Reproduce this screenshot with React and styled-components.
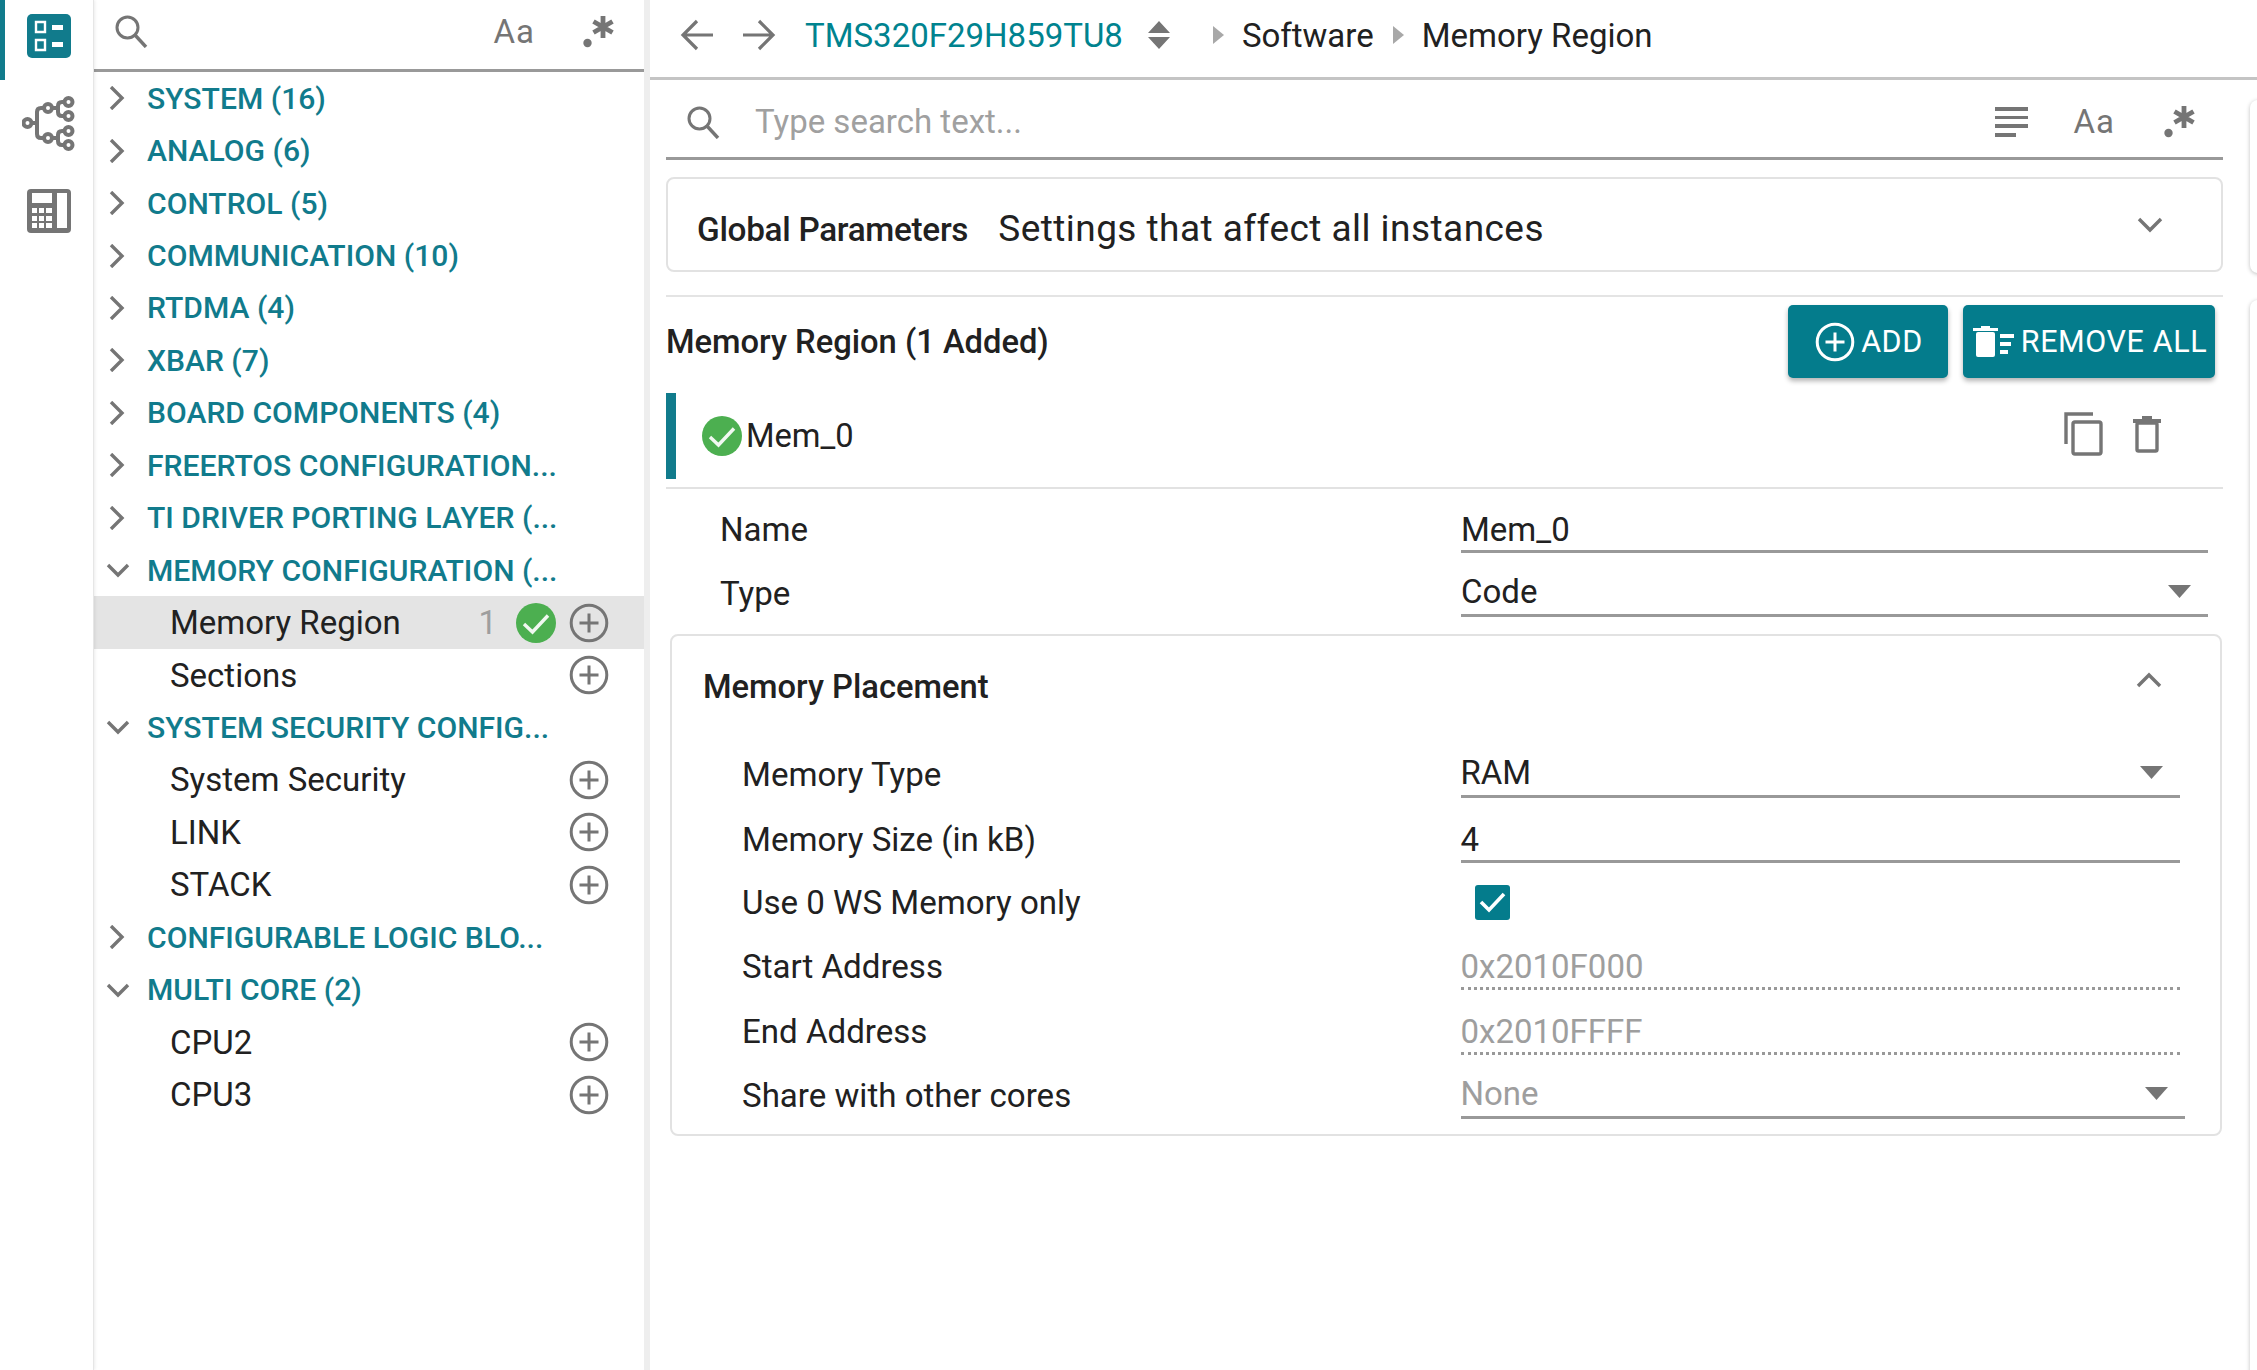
import React from 'react'
import styled, { createGlobalStyle } from 'styled-components'

const GlobalStyle = createGlobalStyle`
  * { box-sizing: border-box; }
  html, body { margin: 0; padding: 0; background: #fff; }
  body { font-family: Roboto, "Liberation Sans", sans-serif; color: #212121; }
`

const sidebarRows = [
  { kind: 'group', label: 'SYSTEM (16)' },
  { kind: 'group', label: 'ANALOG (6)' },
  { kind: 'group', label: 'CONTROL (5)' },
  { kind: 'group', label: 'COMMUNICATION (10)' },
  { kind: 'group', label: 'RTDMA (4)' },
  { kind: 'group', label: 'XBAR (7)' },
  { kind: 'group', label: 'BOARD COMPONENTS (4)' },
  { kind: 'group', label: 'FREERTOS CONFIGURATION...' },
  { kind: 'group', label: 'TI DRIVER PORTING LAYER (...' },
  { kind: 'group', label: 'MEMORY CONFIGURATION (...', open: true },
  { kind: 'item', label: 'Memory Region', count: 1, active: true },
  { kind: 'item', label: 'Sections' },
  { kind: 'group', label: 'SYSTEM SECURITY CONFIG...', open: true },
  { kind: 'item', label: 'System Security' },
  { kind: 'item', label: 'LINK' },
  { kind: 'item', label: 'STACK' },
  { kind: 'group', label: 'CONFIGURABLE LOGIC BLO...' },
  { kind: 'group', label: 'MULTI CORE (2)', open: true },
  { kind: 'item', label: 'CPU2' },
  { kind: 'item', label: 'CPU3' },
]

const Search = () => (
  <svg width="34" height="34" viewBox="0 0 34 34" fill="none" stroke="#757575">
    <circle cx="13.5" cy="13.5" r="10.5" strokeWidth="3" />
    <path d="M21 21 L32 33" strokeWidth="3.4" />
  </svg>
)

const Regex = () => (
  <svg width="32" height="33" viewBox="0 0 32 33" fill="none" stroke="#757575" strokeWidth="4.8">
    <circle cx="4.5" cy="28" r="4.2" fill="#757575" stroke="none" />
    <path d="M20 1 V23 M10.5 6.5 L29.5 17.5 M10.5 17.5 L29.5 6.5" />
  </svg>
)

const Chevron = ({ open }) => (
  <svg width="24" height="24" viewBox="0 0 24 24" fill="none" stroke="#757575" strokeWidth="3.4">
    {open ? <path d="M2 7 L12 17 L22 7" /> : <path d="M5 1 L16 12 L5 23" />}
  </svg>
)

const AddCircle = ({ color = '#757575' }) => (
  <svg width="40" height="40" viewBox="0 0 40 40" fill="none" stroke={color}>
    <circle cx="20" cy="20" r="17.8" strokeWidth="3" />
    <path d="M20 10.5 V29.5 M10.5 20 H29.5" strokeWidth="3" />
  </svg>
)

const GreenCheck = () => (
  <svg width="40" height="40" viewBox="0 0 40 40">
    <circle cx="20" cy="20" r="20" fill="#4caf50" />
    <path d="M8 21 L16.5 29 L32 12.5" fill="none" stroke="#f1f8f1" strokeWidth="3.4" />
  </svg>
)

const Caret = () => (
  <svg width="23" height="13" viewBox="0 0 23 13" fill="#757575">
    <path d="M0 0 H23 L11.5 13 Z" />
  </svg>
)

const FieldLabel = styled.span`
  height: 48px;
  line-height: 49px;
  flex-shrink: 0;
  font-size: 33.1px;
  color: #212121;
`

const FieldValue = styled.div`
  width: ${(p) => (p.$wide ? '724px' : '719px')};
  height: 48px;
  display: flex;
  align-items: center;
  justify-content: space-between;
  padding: ${(p) => (p.$select ? '0' : '4px')} 17px 0 0;
  font-size: 33px;
  color: ${(p) => (p.$variant ? '#9e9e9e' : '#212121')};
  border-bottom: 3px ${(p) => (p.$variant === 'readonly' ? 'dotted' : 'solid')} #999;
`

const Field = ({ label, value, variant, select, wide }) => (
  <FieldRow>
    <FieldLabel>{label}</FieldLabel>
    <FieldValue $variant={variant} $wide={wide} $select={select}>
      <span>{value}</span>
      {select && <Caret />}
    </FieldValue>
  </FieldRow>
)

const FieldRow = styled.div`
  height: 64.5px;
  display: flex;
  align-items: flex-end;
`

const TopFields = styled.div`
  margin-top: -1px;
  padding: 0 15px 0 54px;

  ${FieldLabel} {
    width: 741px;
  }

  ${FieldValue} {
    width: 747px;
  }
`

const PlacementBody = styled.div`
  padding-left: 70px;

  ${FieldLabel} {
    width: 718.5px;
  }
`

export default function App() {
  return (
    <Page>
      <GlobalStyle />
      <Rail>
        <RailItem $active>
          <svg width="44" height="44" viewBox="0 0 44 44">
            <rect width="44" height="44" rx="5" fill="#117b8c" />
            <path d="M9 8h9v10H9z M9 26h9v10H9z" fill="none" stroke="#fff" strokeWidth="2.4" />
            <path d="M25 11h11v5H25z M25 28h11v5H25z" fill="#fff" />
          </svg>
        </RailItem>
        <RailItem>
          <svg width="54" height="56" viewBox="0 0 54 56" fill="none" stroke="#757575" strokeWidth="4">
            <circle cx="5.5" cy="27" r="4" />
            <circle cx="26" cy="12" r="4" />
            <circle cx="26" cy="42" r="4" />
            <circle cx="46.5" cy="6" r="4" />
            <circle cx="46.5" cy="20" r="4" />
            <circle cx="46.5" cy="35" r="4" />
            <circle cx="46.5" cy="49" r="4" />
            <path d="M9.5 27 H15 M22 12 H19 Q15 12 15 16 V38 Q15 42 19 42 H22 M42.5 6 H40 Q36 6 36 10 V16 Q36 20 40 20 H42.5 M42.5 35 H40 Q36 35 36 39 V45 Q36 49 40 49 H42.5 M30 12 H36 M30 42 H36" />
          </svg>
        </RailItem>
        <RailItem>
          <svg width="44" height="44" viewBox="0 0 44 44">
            <rect width="44" height="44" rx="4" fill="#757575" />
            <path d="M5 4h20v10H5z M30 4h10v35H30z" fill="#fff" />
            <path d="M5 19h5v5H5z M12 19h5v5h-5z M19 19h6v5h-6z M5 27h5v5H5z M12 27h5v5h-5z M19 27h6v5h-6z M5 34h5v5H5z M12 34h5v5h-5z M19 34h6v5h-6z" fill="#fff" />
          </svg>
        </RailItem>
      </Rail>

      <Sidebar>
        <SideSearch>
          <Search />
          <SideTools>
            <AaGlyph>Aa</AaGlyph>
            <Regex />
          </SideTools>
        </SideSearch>
        <SideList>
          {sidebarRows.map((row) =>
            row.kind === 'group' ? (
              <GroupRow key={row.label}>
                <ChevronBox><Chevron open={row.open} /></ChevronBox>
                <GroupLabel>{row.label}</GroupLabel>
              </GroupRow>
            ) : (
              <ItemRow key={row.label} $active={row.active}>
                <ItemLabel>{row.label}</ItemLabel>
                {row.count && <Count>{row.count}</Count>}
                {row.active && <GreenSmall><GreenCheck /></GreenSmall>}
                <AddCircle />
              </ItemRow>
            )
          )}
        </SideList>
      </Sidebar>

      <Main>
        <Crumbs>
          <NavIcons>
            <svg width="34" height="32" viewBox="0 0 34 32" fill="none" stroke="#757575" strokeWidth="3.2">
              <path d="M33 16 H3 M17 2 L3 16 L17 30" />
            </svg>
            <svg width="34" height="32" viewBox="0 0 34 32" fill="none" stroke="#757575" strokeWidth="3.2">
              <path d="M1 16 H31 M17 2 L31 16 L17 30" />
            </svg>
          </NavIcons>
          <DeviceName>TMS320F29H859TU8</DeviceName>
          <svg width="24" height="28" viewBox="0 0 24 28" fill="#757575">
            <path d="M12 0 L23 12 H1 Z M1 16 H23 L12 28 Z" />
          </svg>
          <CrumbSep $first />
          <CrumbText>Software</CrumbText>
          <CrumbSep />
          <CrumbText>Memory Region</CrumbText>
        </Crumbs>

        <Content>
          <Column>
            <SearchBar>
              <Search />
              <SearchHint>Type search text...</SearchHint>
              <SearchTools>
                <svg width="33" height="30" viewBox="0 0 33 30" fill="#757575">
                  <path d="M0 0h33v4H0z M0 9h33v3H0z M0 17h33v4H0z M0 26h21v4H0z" />
                </svg>
                <AaGlyph>Aa</AaGlyph>
                <Regex />
              </SearchTools>
            </SearchBar>

            <GlobalCard>
              <GlobalTitle>Global Parameters</GlobalTitle>
              <GlobalDesc>Settings that affect all instances</GlobalDesc>
              <svg width="26" height="18" viewBox="0 0 26 18" fill="none" stroke="#757575" strokeWidth="3.4">
                <path d="M2 3 L13 14 L24 3" />
              </svg>
            </GlobalCard>

            <ModuleHeader>
              <ModuleTitle>Memory Region (1 Added)</ModuleTitle>
              <HeaderButtons>
                <ActionButton $w="160px">
                  <AddCircle color="#fff" />
                  ADD
                </ActionButton>
                <ActionButton $w="252px">
                  <svg width="42" height="32" viewBox="0 0 42 32" fill="#fff">
                    <path d="M0 2h25v3H0z M8 0h9v2H8z M27 8h14v4H27z M27 16h11v4H27z M27 24h8v4h-8z" />
                    <rect x="3" y="6" width="19" height="25" rx="2" />
                  </svg>
                  REMOVE ALL
                </ActionButton>
              </HeaderButtons>
            </ModuleHeader>

            <InstanceRow>
              <InstanceBar />
              <InstanceName>
                <GreenCheck />
                <span>Mem_0</span>
              </InstanceName>
              <InstanceTools>
                <svg width="39" height="44" viewBox="0 0 39 44" fill="none" stroke="#757575" strokeWidth="3.4">
                  <path d="M2 32 V2 H29" />
                  <rect x="9" y="10" width="28" height="32" rx="2" />
                </svg>
                <svg width="28" height="38" viewBox="0 0 28 38" fill="none" stroke="#757575" strokeWidth="3.4">
                  <path d="M0 6 H28" strokeWidth="4" />
                  <path d="M9 3 H19" strokeWidth="4" />
                  <rect x="4" y="8" width="20" height="28" rx="1.5" />
                </svg>
              </InstanceTools>
            </InstanceRow>

            <TopFields>
              <Field label="Name" value="Mem_0" />
              <Field label="Type" value="Code" select />
            </TopFields>

            <PlacementCard>
              <PlacementHead>
                <PlacementTitle>Memory Placement</PlacementTitle>
                <HeadChevron width="26" height="18" viewBox="0 0 26 18" fill="none" stroke="#757575" strokeWidth="3.4">
                  <path d="M2 15 L13 4 L24 15" />
                </HeadChevron>
              </PlacementHead>
              <PlacementBody>
                <Field label="Memory Type" value="RAM" select />
                <Field label="Memory Size (in kB)" value="4" />
                <CheckRow>
                  <FieldLabel>Use 0 WS Memory only</FieldLabel>
                  <CheckBox>
                    <svg width="27" height="22" viewBox="0 0 27 22" fill="none" stroke="#fff" strokeWidth="3.6">
                      <path d="M2 11 L10 19 L25 3" />
                    </svg>
                  </CheckBox>
                </CheckRow>
                <Field label="Start Address" value="0x2010F000" variant="readonly" />
                <Field label="End Address" value="0x2010FFFF" variant="readonly" />
                <Field label="Share with other cores" value="None" variant="disabled" select wide />
              </PlacementBody>
            </PlacementCard>
          </Column>
          <SidePeek>
            <PeekCard $h="173px" />
            <PeekCard $h="1100px" />
          </SidePeek>
        </Content>
      </Main>
    </Page>
  )
}

const Page = styled.div`
  display: flex;
  width: 2257px;
  height: 1370px;
  overflow: hidden;
  background: #fff;
`

const Rail = styled.nav`
  width: 94px;
  flex-shrink: 0;
  border-right: 1px solid #e6e6e6;
  box-shadow: 1px 0 3px rgba(0, 0, 0, 0.08);
  z-index: 2;
`

const RailItem = styled.div`
  display: flex;
  align-items: center;
  justify-content: center;
  height: ${(p) => (p.$active ? '80px' : '87.5px')};
  padding-bottom: ${(p) => (p.$active ? '8px' : '0')};
  border-left: 5px solid ${(p) => (p.$active ? '#117b8c' : 'transparent')};
`

const Sidebar = styled.aside`
  width: 556px;
  flex-shrink: 0;
  border-right: 6px solid #eeeeee;
`

const SideSearch = styled.div`
  height: 72px;
  display: flex;
  align-items: center;
  justify-content: space-between;
  padding: 0 29px 7px 20px;
  border-bottom: 3px solid #999;
`

const SideTools = styled.div`
  display: flex;
  align-items: center;
  gap: 48px;
`

const AaGlyph = styled.span`
  font-size: 33px;
  color: #757575;
  letter-spacing: 1px;
`

const SideList = styled.div`
  display: flex;
  flex-direction: column;
`

const GroupRow = styled.div`
  height: 52.45px;
  display: flex;
  align-items: center;
  padding-left: 12px;
`

const ChevronBox = styled.span`
  width: 41px;
  display: flex;
  align-items: center;
`

const GroupLabel = styled.span`
  font-size: 30.1px;
  font-weight: 500;
  color: #117b8c;
  white-space: nowrap;
`

const ItemRow = styled.div`
  height: 52.45px;
  display: flex;
  align-items: center;
  padding: 0 35px 0 76px;
  background: ${(p) => (p.$active ? '#e4e4e4' : 'transparent')};
`

const ItemLabel = styled.span`
  flex: 1;
  font-size: 33px;
  color: #212121;
`

const Count = styled.span`
  font-size: 33px;
  color: #9e9e9e;
  margin-right: 19px;
`

const GreenSmall = styled.span`
  display: flex;
  margin-right: 13px;
`

const Main = styled.main`
  flex: 1;
  display: flex;
  flex-direction: column;
  min-width: 0;
`

const Crumbs = styled.header`
  height: 80px;
  flex-shrink: 0;
  display: flex;
  align-items: center;
  padding: 0 0 7px 30px;
  border-bottom: 3px solid #c4c4c4;
`

const NavIcons = styled.div`
  display: flex;
  gap: 28px;
  margin-right: 29px;
`

const DeviceName = styled.span`
  font-size: 33px;
  color: #00838f;
  margin-right: 24px;
`

const CrumbSep = styled.span`
  width: 0;
  height: 0;
  border-left: 11px solid #a8a8a8;
  border-top: 9px solid transparent;
  border-bottom: 9px solid transparent;
  margin: ${(p) => (p.$first ? '0 18px 0 42px' : '0 18px 0 19px')};
`

const CrumbText = styled.span`
  font-size: 33px;
  color: #212121;
`

const Content = styled.div`
  flex: 1;
  display: flex;
  min-height: 0;
`

const Column = styled.div`
  width: 1557px;
  margin-left: 16px;
  flex-shrink: 0;
`

const SearchBar = styled.div`
  height: 80px;
  display: flex;
  align-items: center;
  padding: 6px 27px 0 20px;
  border-bottom: 3px solid #999;
`

const SearchHint = styled.span`
  flex: 1;
  margin-left: 35px;
  font-size: 33px;
  color: #a0a0a0;
`

const SearchTools = styled.div`
  display: flex;
  align-items: center;
  gap: 46px;

  svg:last-child {
    margin-left: 3px;
  }
`

const GlobalCard = styled.section`
  height: 95px;
  margin-top: 17px;
  display: flex;
  align-items: center;
  padding: 0 58px 0 29px;
  border: 2px solid #e2e2e2;
  border-radius: 8px;
`

const GlobalTitle = styled.span`
  margin: 9px 30px 0 0;
  font-size: 33.3px;
  font-weight: 500;
  letter-spacing: -0.3px;
`

const GlobalDesc = styled.span`
  flex: 1;
  margin-top: 7px;
  font-size: 37px;
  letter-spacing: 0.45px;
`

const ModuleHeader = styled.div`
  height: 83px;
  margin-top: 23px;
  display: flex;
  align-items: flex-start;
  justify-content: space-between;
  padding: 8px 8px 0 0;
  border-top: 2px solid #e4e4e4;
`

const ModuleTitle = styled.h2`
  margin: 18px 0 0;
  font-size: 32.7px;
  font-weight: 500;
`

const HeaderButtons = styled.div`
  display: flex;
  gap: 15px;
`

const ActionButton = styled.button`
  width: ${(p) => p.$w};
  height: 73px;
  display: flex;
  align-items: center;
  justify-content: center;
  gap: 6px;
  padding: 0 0 0 2px;
  border: none;
  border-radius: 5px;
  background: #047c8c;
  color: #fff;
  font-family: inherit;
  font-size: 30.5px;
  letter-spacing: 0.6px;
  box-shadow: 0 3px 5px rgba(0, 0, 0, 0.3);
`

const InstanceRow = styled.div`
  height: 96px;
  margin-top: 15px;
  display: flex;
  align-items: center;
  padding: 0 62px 9px 0;
  border-bottom: 2px solid #e2e2e2;
`

const InstanceBar = styled.span`
  width: 10px;
  height: 86px;
  align-self: flex-start;
  background: #117b8c;
`

const InstanceName = styled.div`
  flex: 1;
  display: flex;
  align-items: center;
  gap: 4px;
  padding-left: 26px;
  font-size: 32.7px;
`

const InstanceTools = styled.div`
  display: flex;
  align-items: center;
  gap: 30px;
  margin-top: -3px;
`

const PlacementCard = styled.section`
  height: 502px;
  margin: 17px 1px 0 4px;
  border: 2px solid #e2e2e2;
  border-radius: 8px;
`

const PlacementHead = styled.div`
  height: 97.5px;
  display: flex;
  align-items: center;
  justify-content: space-between;
  padding: 0 58px 0 31px;
`

const PlacementTitle = styled.h3`
  margin: 4px 0 0;
  font-size: 32.7px;
  font-weight: 500;
`

const HeadChevron = styled.svg`
  margin-top: -10px;
`

const CheckRow = styled.div`
  height: 63px;
  display: flex;
  align-items: flex-end;
`

const CheckBox = styled.span`
  width: 35px;
  height: 35px;
  margin: 0 0 6px 14px;
  display: flex;
  align-items: center;
  justify-content: center;
  background: #047c8c;
  border-radius: 3px;
`

const SidePeek = styled.div`
  flex: 1;
  padding: 20px 0 0 27px;
  display: flex;
  flex-direction: column;
  gap: 27px;
`

const PeekCard = styled.div`
  height: ${(p) => p.$h};
  width: 40px;
  flex-shrink: 0;
  border-radius: 8px;
  box-shadow: 0 1px 4px rgba(0, 0, 0, 0.25);
`
